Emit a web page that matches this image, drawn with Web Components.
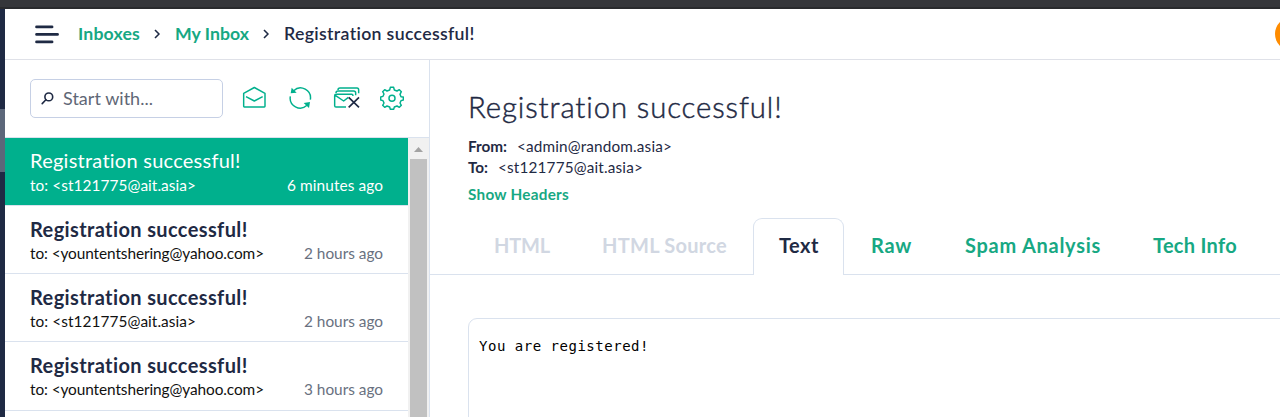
<!DOCTYPE html>
<html lang="en"><head><meta charset="utf-8"><title>Inbox</title>
<style>
html,body{margin:0;height:100%;overflow:hidden;background:#fff}
body{font-family:Lato,"Open Sans",sans-serif;color:#1f2a44}
</style></head><body>
<mail-app></mail-app>
<script>
const define=(name,html,after)=>customElements.define(name,class extends HTMLElement{
  connectedCallback(){
    if(this.shadowRoot)return;
    const t=document.createElement('template');t.innerHTML=html;
    this.attachShadow({mode:'open'}).append(t.content.cloneNode(true));
    if(after)after(this,this.shadowRoot);
  }});

/* One line of text tracked so that it fills the width in its "w" attribute. */
define('fit-text',`<style>:host{display:inline-block;white-space:nowrap}span{display:inline-block}</style><span><slot></slot></span>`,(el,r)=>{
  const s=r.querySelector('span'),w=+el.getAttribute('w'),n=el.textContent.length;
  el.style.width=w+'px';
  s.style.letterSpacing=(w-s.getBoundingClientRect().width)/n+'px';
});

const icons={
menu:['0 0 24 20',24,20,'<g stroke="#1f2a44" stroke-width="2.9" stroke-linecap="round"><path d="M1.6 2.9H17M1.6 10.4H22.5M1.6 17.9H17"/></g>'],
chevron:['0 0 6 10',6,10,'<path d="M1 1L5 5L1 9" fill="none" stroke="#1f2a44" stroke-width="1.6"/>'],
search:['0 0 13 13',13,13,'<g fill="none" stroke="#1f2a44" stroke-width="1.6" stroke-linecap="round"><circle cx="7.8" cy="4.9" r="3.9"/><path d="M4.9 7.8L1.2 11.6"/></g>'],
open:['0 0 72 72',24,24,'<path d="M5 22L37 4.5L69 22V61Q69 63 67 63H7Q5 63 5 61ZM12 32L37 45L62 32"/>'],
refresh:['0 0 72 72',24,24,'<path d="M17 14A30 30 0 0 1 67 41M7 31A30 30 0 0 0 57 58"/><path d="M11 5L8 22L26 20ZM47 51L66 48L63 66Z" fill="#00b08d" stroke="none"/>'],
clear:['0 0 84 72',28,24,'<path d="M39 63H9Q5 63 5 59V29Q5 25 9 25H56Q60 25 60 30M7 28L32 45L46 34M9 21Q9 15 15 15H62Q68 15 68 21V28M15 12Q15 6 21 6H72Q77 6 77 12V22"/><path d="M47 34L78 64M78 34L47 64" stroke="#1f2a44" stroke-width="5"/>'],
gear:['0 0 72 72',24,24,'<circle cx="36" cy="37" r="9"/><path d="M31 4H41L43 12L51 15L58 11L64 17L60 25L63 32L70 33V42L63 44L60 51L64 58L58 64L51 60L43 63L41 70H31L29 63L21 60L14 64L8 58L12 51L9 44L2 42V33L9 31L12 24L8 17L14 11L21 15L29 12Z"/>']};
define('ui-icon',`<style>:host{display:block;flex:none}svg{display:block;fill:none;stroke:#00b08d;stroke-width:4.4;stroke-linejoin:round}</style><svg></svg>`,(el,r)=>{
  const [v,w,h,p]=icons[el.getAttribute('name')],s=r.querySelector('svg');
  s.setAttribute('viewBox',v);s.setAttribute('width',w);s.setAttribute('height',h);s.innerHTML=p;
});

define('bread-crumbs',`<style>
:host{display:flex;align-items:center;height:50px;box-sizing:border-box;padding-left:30px;background:#fff;border-bottom:1px solid #dfe1e8;font-size:17.7px;font-weight:700;line-height:48px;overflow:hidden;position:relative}
a{color:#17a883}.m{margin-right:19px}.c{margin:0 15px 0 14px}.t{font-weight:600}
.av{position:absolute;left:1270px;top:8px;width:34px;height:34px;border-radius:50%;background:#ff8c00}
</style><ui-icon class="m" name="menu"></ui-icon><a><fit-text w="62">Inboxes</fit-text></a><ui-icon class="c" name="chevron"></ui-icon><a><fit-text w="74">My Inbox</fit-text></a><ui-icon class="c" name="chevron"></ui-icon><fit-text class="t" w="191">Registration successful!</fit-text><div class="av"></div>`);

define('mail-toolbar',`<style>
:host{display:flex;align-items:flex-start;height:79px;box-sizing:border-box;padding:20px 0 0 25px;border-bottom:1px solid #dae2ee}
.s{display:flex;align-items:center;box-sizing:border-box;width:193px;height:39px;border:1px solid #c6d0e5;border-radius:5px;padding-left:10px;font-size:18px;font-weight:400;color:#5f6776;line-height:36px;margin-right:19px}
.s fit-text{margin-top:-2px}.s ui-icon{margin-right:9px}
.i{margin-top:7px;margin-right:22px}
</style><div class="s"><ui-icon name="search"></ui-icon><fit-text w="90">Start with...</fit-text></div>
<ui-icon class="i" name="open"></ui-icon><ui-icon class="i" style="margin-right:21px" name="refresh"></ui-icon><ui-icon class="i" style="margin-right:19px" name="clear"></ui-icon><ui-icon class="i" name="gear"></ui-icon>`);

define('mail-item',`<style>
:host{display:block;box-sizing:border-box;height:68px;padding:calc(10px + var(--drop,0px)) 25px 0;border-bottom:1px solid #dae2ee;color:#111}
.t{font-size:20px;line-height:24px;font-weight:700;color:#1f2a44}
.r{display:flex;justify-content:space-between;margin-top:calc(2px - var(--drop,0px));font-size:15.4px;line-height:22px}
.d{color:#697180}
:host([active]){background:#00b08d;color:#fff}:host([active]) .t{color:#fff;font-weight:400}:host([active]) .d{color:#fff}
</style><div class="t"></div><div class="r"><span class="to"></span><span class="d"></span></div>`,(el,r)=>{
  const put=(q,w,t)=>{const f=document.createElement('fit-text');f.setAttribute('w',w);f.textContent=t;r.querySelector(q).append(f)};
  put('.t',el.hasAttribute('active')?211:218,'Registration successful!');
  put('.to',el.getAttribute('tw'),'to: <'+el.getAttribute('to')+'>');
  put('.d',el.getAttribute('dw'),el.getAttribute('date'));
});

define('scroll-rail',`<style>:host{display:flex;flex-direction:column;width:21px;background:#f1f1f1;align-items:center}
svg{display:block;flex:none}.b{width:17px;flex:1;background:#c1c1c1}</style><svg width="21" height="21"><path d="M6 14L10.5 9L15 14Z" fill="#a3a3a3"/></svg><div class="b"></div>`);

define('mail-list',`<style>:host{display:flex;height:279px;overflow:hidden}.l{width:403px}</style>
<div class="l"><mail-item active to="st121775@ait.asia" tw="166" date="6 minutes ago" dw="96"></mail-item>
<mail-item style="--drop:1px" to="yountentshering@yahoo.com" tw="234" date="2 hours ago" dw="79"></mail-item>
<mail-item style="--drop:1px" to="st121775@ait.asia" tw="166" date="2 hours ago" dw="79"></mail-item>
<mail-item style="--drop:1px;height:69px" to="yountentshering@yahoo.com" tw="234" date="3 hours ago" dw="79"></mail-item></div><scroll-rail></scroll-rail>`);

define('mail-tabs',`<style>
:host{display:flex;height:57px;margin-top:13px;font-size:20px;font-weight:700;line-height:54px;color:#17a883}
div{flex:none;box-sizing:border-box;border-bottom:1px solid #dae2ee;padding-left:26px;white-space:nowrap}
.off{color:#d1d7e2}.on{color:#1f2a44;border:1px solid #dae2ee;border-bottom:0;border-radius:9px 9px 0 0;padding-left:25px;line-height:52px}
</style><div class="off" style="width:146px;padding-left:64px"><fit-text w="56">HTML</fit-text></div><div class="off" style="width:177px"><fit-text w="125">HTML Source</fit-text></div><div class="on" style="width:91px"><fit-text w="40">Text</fit-text></div><div style="width:95px;padding-left:27px"><fit-text w="41">Raw</fit-text></div><div style="width:188px"><fit-text w="136">Spam Analysis</fit-text></div><div style="width:200px"><fit-text w="84">Tech Info</fit-text></div>`);

define('mail-view',`<style>
:host{display:block;flex:1;overflow:hidden}
h1{margin:29px 0 0 38px;font-size:29.3px;font-weight:300;line-height:36px;-webkit-text-stroke:.45px #1f2a44}
.h{margin-left:38px;display:flex;gap:10px;font-size:15.3px;line-height:21px}.h b{font-weight:700}
.f{margin-top:11px}.s{color:#17a883;font-weight:700;margin-top:6px}
.body{margin:43px 0 0 38px;border:1px solid #dae2ee;border-radius:9px;width:900px;height:200px;padding:17px 10px;font:14px/20px "DejaVu Sans Mono",monospace;color:#000}
</style><h1><fit-text w="315">Registration successful!</fit-text></h1>
<div class="h f"><b><fit-text w="39">From:</fit-text></b><fit-text w="155">&lt;admin@random.asia&gt;</fit-text></div>
<div class="h"><b><fit-text w="20">To:</fit-text></b><fit-text w="145">&lt;st121775@ait.asia&gt;</fit-text></div>
<div class="h s"><fit-text w="101">Show Headers</fit-text></div>
<mail-tabs></mail-tabs>
<div class="body"><fit-text w="170">You are registered!</fit-text></div>`);

define('mail-app',`<style>
:host{display:grid;grid-template:9px 51px 357px / 5px 425px 1fr;width:1280px;height:417px;overflow:hidden}
.top{grid-column:1/-1;background:#35363a;border-bottom:2px solid #292a2d;box-sizing:border-box}
.rail{grid-row:2/4;background:linear-gradient(#1f2a44 100px,#5c677a 100px 163px,#1f2a44 163px)}
bread-crumbs{grid-column:2/4;height:51px}
.side{border-right:1px solid #dae2ee;margin-top:-1px}
</style><div class="top"></div><div class="rail"></div><bread-crumbs></bread-crumbs><div class="side"><mail-toolbar></mail-toolbar><mail-list></mail-list></div><mail-view></mail-view>`);
</script></body></html>
